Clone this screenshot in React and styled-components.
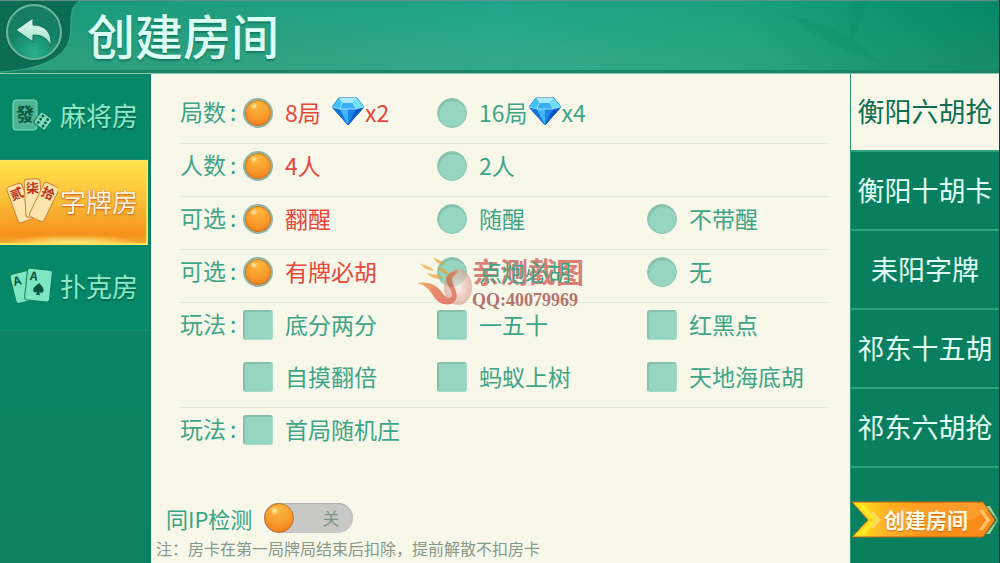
import { useState } from 'react'
import styled, { createGlobalStyle } from 'styled-components'

const GlobalStyle = createGlobalStyle`
  * {
    box-sizing: border-box;
  }
  body {
    margin: 0;
    background: #f7f7ea;
    font-family: 'Noto Sans CJK SC', sans-serif;
  }
  button, input {
    font: inherit;
    margin: 0;
  }
`

const PageStyles = styled.div`
  min-height: 100vh;
  display: flex;
  flex-direction: column;
  border-right: 1px solid #1d3c35;
`

const Header = styled.header`
  position: relative;
  height: 74px;
  flex: none;
  display: flex;
  align-items: center;
  gap: 25px;
  padding: 0 6px 6px;
  border-top: 1px solid #5f8f88;
  border-bottom: 1px solid #8cc9b0;
  background:
    linear-gradient(to top, #1b8462 3px, transparent 3px),
    linear-gradient(to bottom, rgba(0, 160, 130, 0.25), rgba(90, 180, 140, 0.2)),
    linear-gradient(to right, #1f9878 0%, #2a9d7f 25%, #2ba68a 50%, #21a07b 75%, #0f8f6b 88%, #07805f 100%);
`

const HeaderArt = styled.svg`
  position: absolute;
  top: 0;
  left: 0;
`

const LeafArt = styled.svg`
  position: absolute;
  top: 0;
  right: 90px;
`

const BackButton = styled.button`
  position: relative;
  width: 56px;
  height: 56px;
  flex: none;
  display: flex;
  align-items: center;
  justify-content: center;
  margin-bottom: 4px;
  padding: 0;
  border: 2px solid #6fb6a0;
  border-radius: 50%;
  background: radial-gradient(circle at 50% 90%, #27b18d 0%, #138166 50%, #1a7a63 100%);
  box-shadow: 0 0 2px #0a4a3a;
  cursor: pointer;
`

const Title = styled.h1`
  position: relative;
  margin: 0;
  font-size: 48px;
  line-height: 64px;
  font-weight: 500;
  color: #dcfff4;
  text-shadow: 0 2px 2px #137a60;
`

const Body = styled.div`
  flex: 1;
  display: flex;
`

const Sidebar = styled.nav`
  width: 151px;
  flex: none;
  border-right: 1px solid #0b7a5b;
  background: linear-gradient(#0a7f60, #0a8464 60%, #0c8161);
`

const RoomButton = styled.button`
  width: ${(props) => (props.$active ? '148px' : '100%')};
  height: ${(props) => (props.$active ? '85px' : '86px')};
  display: flex;
  align-items: center;
  justify-content: space-between;
  padding: 0 12px 4px 8px;
  border: 0;
  border-bottom: 1px solid #1c8f70;
  background: #048868;
  color: #8fe8c9;
  font-size: 26px;
  line-height: 36px;
  white-space: nowrap;
  text-shadow: 0 2px 1px #03664d;
  cursor: pointer;

  svg {
    flex: none;
    text-shadow: none;
  }

  ${(props) =>
    props.$active &&
    `
    padding: 0 8px 4px 6px;
    border: 2px solid #ffe45c;
    border-left: 0;
    background:
      radial-gradient(ellipse 70px 8px at 50% 100%, #fff08a, transparent),
      linear-gradient(#ffe34d, #fbc03a 45%, #f5921c 90%, #f8a92c);
    color: #fff6e0;
    text-shadow: 0 1px 2px #c2571a, 0 0 1px #c2571a;
  `}
`

const MainForm = styled.form`
  flex: 1;
  min-width: 0;
  display: flex;
  flex-direction: column;
  padding: 17px 20px 3px 29px;
  background: #f7f7ea;
`

const OptionRow = styled.fieldset`
  margin: 0;
  min-width: 0;
  display: grid;
  grid-template-columns: 63px 194px 210px 1fr;
  grid-auto-rows: 52px;
  padding: 0;
  border: 0;
  border-bottom: ${(props) => (props.$last ? '0' : '1px solid #e3ebdd')};
`

const RowLabel = styled.span`
  grid-column: 1;
  height: 40px;
  display: flex;
  align-items: center;
  gap: 4px;
  font-size: 23px;
  color: #3fa586;
`

const Option = styled.label`
  grid-column: ${(props) => props.$column};
  height: 44px;
  display: flex;
  align-items: center;
  gap: 12px;
  font-size: 23px;
  white-space: nowrap;
  color: #3fa586;
  cursor: pointer;

  &:has(input[type='radio']:checked) {
    color: #e5483a;
  }
`

const Radio = styled.input`
  appearance: none;
  width: 30px;
  height: 30px;
  flex: none;
  border: 1px solid #8fc4b0;
  border-radius: 50%;
  background: #96d5bf;
  box-shadow: inset 1px 2px 1px #84bfab;

  &:checked {
    border: 2px solid #8fb5a8;
    background:
      radial-gradient(circle at 34% 24%, #fff0b0 0, transparent 14%),
      radial-gradient(circle at 50% 20%, #fbb83c, #f99a2c 55%, #f4701c 100%);
    box-shadow: inset 0 0 1px 1px #c9761f;
  }
`

const Checkbox = styled.input`
  appearance: none;
  width: 30px;
  height: 30px;
  flex: none;
  border: 1px solid #86bfab;
  border-right-color: #a5dac7;
  border-bottom-color: #a5dac7;
  border-radius: 3px;
  background: #96d5bf;
  box-shadow: inset 1px 1px 1px #86bfab;

  &:checked {
    background: #f99a2c;
  }
`

const OptionText = styled.span`
  position: relative;
  display: flex;
  align-items: center;
  padding-bottom: 3px;
`

const Name = styled.span`
  position: relative;
  min-width: 46px;
`

const Watermark = styled.div`
  position: absolute;
  top: 0;
  left: -62px;
  display: flex;
  align-items: flex-start;
  pointer-events: none;
  opacity: 0.65;
`

const WatermarkText = styled.div`
  display: flex;
  flex-direction: column;
  color: #c9403c;
  font-size: 28px;
  line-height: 34px;
  font-weight: 700;

  small {
    font-family: 'Liberation Serif', serif;
    font-size: 18px;
    line-height: 24px;
    color: #8e2f2c;
  }
`

const Footer = styled.div`
  margin: auto 0 0 -24px;
  color: #86998a;
`

const SwitchRow = styled.label`
  display: flex;
  align-items: center;
  gap: 12px;
  padding-left: 10px;
  font-size: 22px;
  line-height: 30px;
  color: #35a583;
`

const Track = styled.span`
  width: 89px;
  height: 30px;
  display: flex;
  flex-direction: ${(props) => (props.$on ? 'row-reverse' : 'row')};
  align-items: center;
  justify-content: space-between;
  padding-right: ${(props) => (props.$on ? '0' : '14px')};
  padding-left: ${(props) => (props.$on ? '14px' : '0')};
  border-radius: 15px;
  background: #c8c8c6;
  box-shadow: inset 0 1px 1px #adadab;
  font-size: 17px;
  color: #7d958a;
`

const Knob = styled.input`
  appearance: none;
  width: 30px;
  height: 30px;
  border: 1px solid #b5723a;
  border-radius: 50%;
  background:
    radial-gradient(circle at 34% 24%, #fff0b0 0, transparent 16%),
    radial-gradient(circle at 50% 20%, #fbb83c, #f99a2c 55%, #f4701c 100%);
`

const Note = styled.p`
  margin: 3px 0 0;
  font-size: 16px;
  line-height: 24px;
`

const GameList = styled.aside`
  width: 149px;
  flex: none;
  display: flex;
  flex-direction: column;
  border-left: 1px solid #2a9372;
  background: #0a7f60;
`

const GameButton = styled.button`
  height: ${(props) => (props.$active ? '78px' : '79px')};
  padding: 0 0 2px;
  border: 0;
  border-bottom: 2px solid #2fa37f;
  background: ${(props) => (props.$active ? '#f7f7ea' : '#0a7f60')};
  color: ${(props) => (props.$active ? '#0d6f52' : '#e2fff5')};
  font-size: 27px;
  line-height: 36px;
  white-space: nowrap;
  cursor: pointer;
`

const CreateButton = styled.button`
  position: relative;
  width: 146px;
  height: 38px;
  margin: auto 0 24px 1px;
  padding: 0 0 2px 2px;
  border: 0;
  background: none;
  color: #fff9e0;
  font-size: 21px;
  line-height: 34px;
  font-weight: 700;
  cursor: pointer;

  svg {
    position: absolute;
    top: 0;
    left: 0;
  }
  span {
    position: relative;
    text-shadow: 0 1px 1px #c86a10;
  }
`

const BackIcon = () => (
  <svg width='38' height='30' viewBox='0 0 38 30' aria-hidden='true'>
    <defs>
      <linearGradient id='back' x1='0' y1='0' x2='0' y2='1'>
        <stop offset='0' stopColor='#e2f7ef' />
        <stop offset='1' stopColor='#9fe0cb' />
      </linearGradient>
    </defs>
    <path d='M1 13 L18 1 V8 C30 8 37 15 36 29 C32 21 27 18 18 18 V25 Z' fill='url(#back)' stroke='#0f6b54' strokeWidth='1' />
  </svg>
)

const Diamond = () => (
  <svg width='34' height='29' viewBox='0 0 34 29' aria-hidden='true'>
    <path d='M8 1 H26 L33 10 L17 28 L1 10 Z' fill='#1a9df0' stroke='#1267b5' strokeWidth='1' strokeLinejoin='round' />
    <path d='M8 1 H26 L22 6 H11 Z' fill='#a5ecff' />
    <path d='M8 1 L11 6 L9 12 L1 10 Z' fill='#3fc3fa' />
    <path d='M26 1 L22 6 L25 12 L33 10 Z' fill='#6fe0f7' />
    <path d='M11 6 H22 L25 12 H9 Z' fill='#39aef5' />
    <path d='M1 10 L9 12 L17 28 Z' fill='#1473dd' />
    <path d='M9 12 H25 L17 28 Z' fill='#1b86ea' />
    <path d='M9 12 H17 V28 Z' fill='#45b5fa' />
    <path d='M33 10 L25 12 L17 28 Z' fill='#0c55c4' />
    <path d='M1 10 L9 12 H25 L33 10 M11 6 L9 12 M22 6 L25 12' fill='none' stroke='#c4f3ff' strokeWidth='0.7' />
  </svg>
)

const MahjongIcon = () => (
  <svg width='46' height='34' viewBox='0 0 46 34' aria-hidden='true'>
    <rect x='5' y='2' width='24' height='30' rx='3' fill='#4fb493' stroke='#7fdcbd' />
    <text x='17' y='23' textAnchor='middle' fontSize='18' fontWeight='700' fill='#06563f'>發</text>
    <g transform='rotate(36 35 23)'>
      <rect x='28' y='16' width='14' height='14' rx='2' fill='#7fdcbd' stroke='#0b7a5b' />
      {[19, 23, 27].map((y) => (
        <g key={y} fill='#06563f'>
          <circle cx='32' cy={y} r='1.4' />
          <circle cx='38' cy={y} r='1.4' />
        </g>
      ))}
    </g>
  </svg>
)

const tiles = [
  { text: '贰', rotate: -20, x: 14, y: 27 },
  { text: '柒', rotate: -3, x: 27, y: 22 },
  { text: '拾', rotate: 26, x: 38, y: 26 }
]

const TilesIcon = () => (
  <svg width='52' height='50' viewBox='0 0 52 50' aria-hidden='true'>
    {tiles.map((tile) => (
      <g key={tile.text} transform={`translate(${tile.x} ${tile.y}) rotate(${tile.rotate})`}>
        <rect x='-8' y='-19' width='16' height='38' rx='3' fill='#fde3ac' stroke='#c98436' />
        <text x='0' y='-5' textAnchor='middle' fontSize='13' fontWeight='700' fill='#b8321e'>{tile.text}</text>
      </g>
    ))}
  </svg>
)

const PokerIcon = () => (
  <svg width='46' height='40' viewBox='0 0 46 40' aria-hidden='true'>
    <g transform='rotate(-14 15 22)'>
      <rect x='5' y='6' width='20' height='30' rx='3' fill='#7fe6c4' stroke='#0b7a5b' />
      <text x='11' y='18' textAnchor='middle' fontSize='12' fontWeight='700' fill='#06563f'>A</text>
    </g>
    <g transform='rotate(6 30 19)'>
      <rect x='18' y='3' width='25' height='32' rx='3' fill='#7fe6c4' stroke='#0b7a5b' />
      <text x='25' y='15' textAnchor='middle' fontSize='12' fontWeight='700' fill='#06563f'>A</text>
      <path d='M31 17 C34 20 37 22 36 25 C35 27 33 27 32 26 L33 29 H29 L30 26 C28 27 26 27 26 25 C25 22 28 20 31 17 Z' fill='#06563f' />
    </g>
  </svg>
)

const Phoenix = () => (
  <svg width='55' height='56' viewBox='0 0 55 56' aria-hidden='true'>
    <defs>
      <linearGradient id='flame' x1='0' y1='0' x2='0.8' y2='1'>
        <stop offset='0' stopColor='#f0a818' />
        <stop offset='0.6' stopColor='#e2512c' />
        <stop offset='1' stopColor='#d8402c' />
      </linearGradient>
      <radialGradient id='pearl'>
        <stop offset='0' stopColor='#f8ece8' />
        <stop offset='1' stopColor='#dc9c90' />
      </radialGradient>
    </defs>
    <ellipse cx='41' cy='33' rx='14' ry='18' fill='url(#pearl)' />
    <path d='M0 29 C10 27 19 30 24 37 C28 43 31 45 34 43 C38 38 28 31 29 23 C32 18 37 18 41 16 C40 20 35 22 35 26 C36 34 43 40 38 47 C33 53 22 51 17 43 C13 36 9 31 0 29 Z' fill='url(#flame)' />
    <path d='M3 9 C8 12 13 12 17 16 C12 17 7 15 3 9 Z M16 3 C21 6 25 6 28 11 C22 11 18 8 16 3 Z M10 19 C16 21 22 19 26 24 C20 26 14 24 10 19 Z M20 13 C25 15 29 14 32 20 C26 20 22 17 20 13 Z' fill='#e8a02a' />
  </svg>
)

const ArrowShape = () => (
  <svg width='146' height='38' viewBox='0 0 146 38' aria-hidden='true'>
    <defs>
      <linearGradient id='arrow' x1='0' y1='0' x2='1' y2='0'>
        <stop offset='0' stopColor='#ffe81c' />
        <stop offset='0.25' stopColor='#ffb01c' />
        <stop offset='0.5' stopColor='#fb8f14' />
        <stop offset='1' stopColor='#f98a1c' />
      </linearGradient>
    </defs>
    <path d='M134 5 L145 19 L134 33 L138 33 L146 19 L138 5 Z' fill='#9fcf8f' />
    <path d='M0 1 H131 L143 19 L131 36 H0 L16 19 Z' fill='url(#arrow)' stroke='#b5671a' />
    <path d='M30 9 C60 1 100 2 131 2 L136 9 C120 22 90 30 50 35 H24 Z' fill='#ffb347' opacity='0.4' />
    <path d='M5 4 L20 19 L5 34 H12 L25 19 L12 4 Z' fill='#fff02a' opacity='0.8' />
    <path d='M18 11 L24 19 L18 27 H22 L29 19 L22 11 Z' fill='#ffd95a' />
    <path d='M127 9 H131 L138 19 L131 29 H127 L134 19 Z' fill='#ffc46a' />
  </svg>
)

const rooms = [
  { name: '麻将房', icon: <MahjongIcon /> },
  { name: '字牌房', icon: <TilesIcon /> },
  { name: '扑克房', icon: <PokerIcon /> }
]

const games = ['衡阳六胡抢', '衡阳十胡卡', '耒阳字牌', '祁东十五胡', '祁东六胡抢']

const rows = [
  { name: 'rounds', label: '局数', type: 'radio', options: [{ text: '8局', price: 'x2' }, { text: '16局', price: 'x4' }] },
  { name: 'players', label: '人数', type: 'radio', options: [{ text: '4人' }, { text: '2人' }] },
  { name: 'wake', label: '可选', type: 'radio', options: [{ text: '翻醒' }, { text: '随醒' }, { text: '不带醒' }] },
  { name: 'win', label: '可选', type: 'radio', options: [{ text: '有牌必胡' }, { text: '点炮必胡', marked: true }, { text: '无' }] },
  {
    name: 'rules',
    label: '玩法',
    type: 'checkbox',
    options: ['底分两分', '一五十', '红黑点', '自摸翻倍', '蚂蚁上树', '天地海底胡'].map((text) => ({ text }))
  },
  { name: 'dealer', label: '玩法', type: 'checkbox', options: [{ text: '首局随机庄' }] }
]

const OptionItem = ({ row, option, index }) => {
  const Control = row.type === 'radio' ? Radio : Checkbox
  return (
    <Option $column={(index % 3) + 2}>
      <Control
        type={row.type}
        name={row.name}
        value={option.text}
        defaultChecked={row.type === 'radio' && index === 0}
      />
      <OptionText>
        {option.marked && (
          <Watermark>
            <Phoenix />
            <WatermarkText>
              亲测截图
              <small>QQ:40079969</small>
            </WatermarkText>
          </Watermark>
        )}
        <Name>{option.text}</Name>
        {option.price && (
          <>
            <Diamond />
            {option.price}
          </>
        )}
      </OptionText>
    </Option>
  )
}

const App = () => {
  const [room, setRoom] = useState('字牌房')
  const [game, setGame] = useState('衡阳六胡抢')
  const [ipCheck, setIpCheck] = useState(false)

  return (
    <PageStyles>
      <GlobalStyle />
      <Header>
        <HeaderArt width='90' height='72' viewBox='0 0 90 72' aria-hidden='true'>
          <path d='M0 0 H80 C66 8 74 24 69 40 C62 60 34 69 0 71 Z' fill='#0b6e54' />
          <path d='M80 0 C66 8 74 24 69 40 C62 60 34 69 0 71' fill='none' stroke='#3aa98a' />
        </HeaderArt>
        <LeafArt width='120' height='70' viewBox='0 0 120 70' aria-hidden='true'>
          <path d='M0 14 C30 20 60 30 90 62 C60 50 30 40 0 14 Z M62 0 H78 C74 14 68 30 62 42 C60 26 58 12 62 0 Z' fill='#0c8763' opacity='0.25' />
        </LeafArt>
        <BackButton type='button' aria-label='返回'>
          <BackIcon />
        </BackButton>
        <Title>创建房间</Title>
      </Header>
      <Body>
        <Sidebar>
          {rooms.map((item) => (
            <RoomButton key={item.name} type='button' $active={item.name === room} onClick={() => setRoom(item.name)}>
              {item.icon}
              {item.name}
            </RoomButton>
          ))}
        </Sidebar>
        <MainForm id='room-form' onSubmit={(e) => e.preventDefault()}>
          {rows.map((row, i) => (
            <OptionRow key={row.name} $last={i === rows.length - 1} aria-label={row.label}>
              <RowLabel>
                {row.label}
                <span>:</span>
              </RowLabel>
              {row.options.map((option, index) => (
                <OptionItem key={option.text} row={row} option={option} index={index} />
              ))}
            </OptionRow>
          ))}
          <Footer>
            <SwitchRow>
              同IP检测
              <Track $on={ipCheck}>
                <Knob type='checkbox' role='switch' checked={ipCheck} onChange={(e) => setIpCheck(e.target.checked)} />
                {ipCheck ? '开' : '关'}
              </Track>
            </SwitchRow>
            <Note>注：房卡在第一局牌局结束后扣除，提前解散不扣房卡</Note>
          </Footer>
        </MainForm>
        <GameList>
          {games.map((name) => (
            <GameButton key={name} type='button' $active={name === game} onClick={() => setGame(name)}>
              {name}
            </GameButton>
          ))}
          <CreateButton type='submit' form='room-form'>
            <ArrowShape />
            <span>创建房间</span>
          </CreateButton>
        </GameList>
      </Body>
    </PageStyles>
  )
}

export default App
